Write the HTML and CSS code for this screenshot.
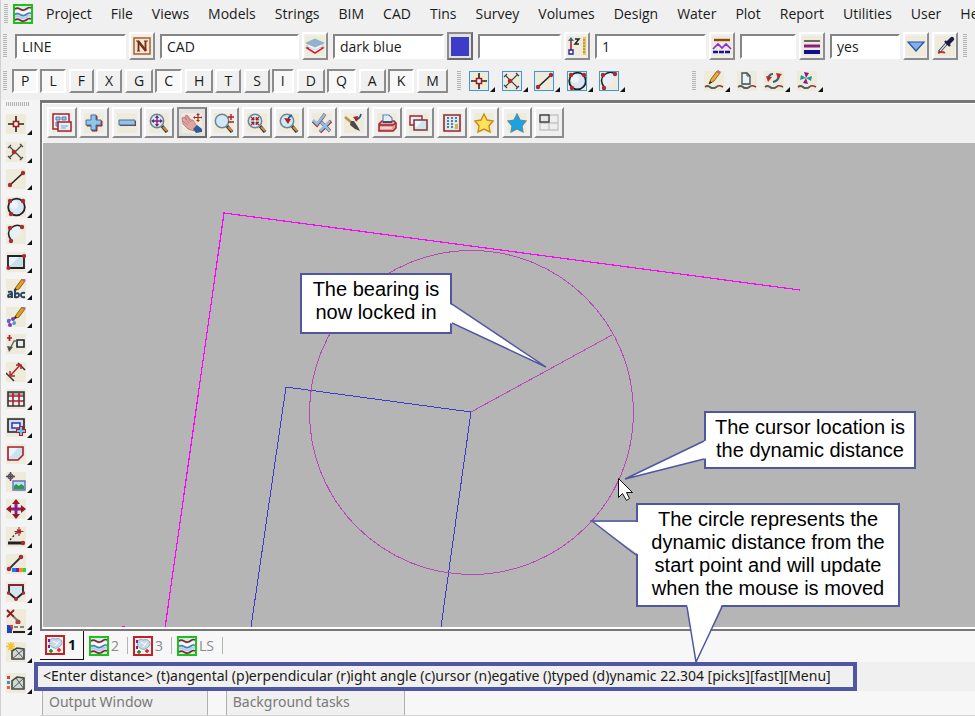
FILE: index.html
```html
<!DOCTYPE html>
<html lang="en">
<head>
<meta charset="utf-8">
<title>CAD workspace</title>
<link rel="stylesheet" href="styles.css">
</head>
<body>
<svg class="defs" aria-hidden="true">
  <symbol id="waves" viewBox="0 0 20 20"><rect x="1" y="1" width="18" height="18" fill="#dcebef" stroke="#19c419" stroke-width="2"/><g fill="none" stroke-width="1.6"><path d="M2 5c4-3 5 2 9 1s4-4 7-2" stroke="#7c2b30"/><path d="M2 8c4-3 5 2 9 1s4-4 7-2" stroke="#fff"/><path d="M2 10.500c4-3 5 2 9 1s4-4 7-2" stroke="#4a7fc0"/><path d="M2 13c4-3 5 2 9 1s4-4 7-2" stroke="#a9cdea"/><path d="M2 16c4-3 5 2 9 1s4-4 7-2" stroke="#7c2b30"/></g></symbol>
  <symbol id="plan" viewBox="0 0 20 20"><rect x="1" y="1" width="18" height="18" fill="#f4f1ee" stroke="#c4202a" stroke-width="2"/><path d="M5 5q2-3 5-1 4-2 7 2 1 4-3 6-3 3-7 0-4-2-2-7z" fill="#c6dbe8" stroke="#8fb0c6"/><path d="M8 6l5 3M10 11l4-5" stroke="#fff"/><path d="M3 4h2v3H3zM3 10h2v3H3z" fill="#8b1a9a"/><path d="M4 16h4M6 14v4" stroke="#128a12" stroke-width="1.4"/><path d="M12 15h4M14 13v4" stroke="#e31818" stroke-width="1.4"/></symbol>
  <symbol id="point" viewBox="0 0 20 20"><path d="M10 2v5M10 13v5M2 10h5M13 10h5" stroke="#222" stroke-width="1.600"/><path d="M7.500 7.500h5v5h-5z" fill="#fff" stroke="#a01820" stroke-width="1.600"/></symbol>
  <symbol id="cross" viewBox="0 0 20 20"><path d="M3 16L16 3M4 5l12 12M2 14l3 3M14 2l3 3M2 6l3-3M14 18l3-3" stroke="#444" stroke-width="1.200"/><circle cx="8" cy="10" r="2.300" fill="#a92b30"/></symbol>
  <symbol id="line" viewBox="0 0 20 20"><path d="M4 16L17 4" stroke="#222" stroke-width="1.600"/><circle cx="4" cy="16" r="2.200" fill="#a92b30"/><circle cx="17" cy="4" r="2.200" fill="#a92b30"/></symbol>
  <symbol id="circle" viewBox="0 0 20 20"><circle cx="10.500" cy="10" r="8.300" fill="#d6e6f2" stroke="#222" stroke-width="1.800"/><circle cx="8" cy="8" r="4" fill="#edf5fa"/><circle cx="4" cy="4" r="2.200" fill="#a92b30"/><circle cx="17" cy="4" r="2.200" fill="#a92b30"/><circle cx="5" cy="17" r="2.200" fill="#a92b30"/></symbol>
  <symbol id="arc" viewBox="0 0 20 20"><path d="M5 17Q0 8 6 3q6-3 11 0-2 8-12 14z" fill="#e6f0f7"/><path d="M5 16Q0 9 5 4q6-5 11-1" fill="none" stroke="#222" stroke-width="1.500"/><circle cx="4" cy="4" r="2.200" fill="#a92b30"/><circle cx="16" cy="3" r="2.200" fill="#a92b30"/><circle cx="5" cy="17" r="2.200" fill="#a92b30"/></symbol>
  <symbol id="rect" viewBox="0 0 20 20"><path d="M2 4h16v12H2z" fill="#c9e0ea" stroke="#222" stroke-width="1.800"/><path d="M3 5h10l-8 8H3z" fill="#e6f3f7"/><circle cx="18" cy="4" r="2.100" fill="#a92b30"/><circle cx="2.500" cy="16" r="2.100" fill="#a92b30"/></symbol>
  <symbol id="pencil" viewBox="0 0 20 20"><path d="M8 12l2-4 6-8 3 2-6 8z" fill="#e0a126" stroke="#6b4a12" stroke-width=".8"/><path d="M15 1l2-2 3 2-1.500 2z" fill="#c46b76"/><path d="M8 12l1-3 2 1.500z" fill="#222"/></symbol>
  <symbol id="text" viewBox="0 0 20 20"><use href="#pencil" width="20" height="20"/><g fill="none" stroke="#24405c" stroke-width="1.900"><path d="M2 13q4-1 4 1v5M6 15q-4 0-4 2t4 0M9 10v9M9 15q4-2 4 1t-4 2M19 14q-4-1-4 2t4 2"/></g></symbol>
  <symbol id="paint" viewBox="0 0 20 20"><use href="#pencil" width="20" height="20"/><circle cx="3" cy="14" r="2.200" fill="#6a5be0"/><circle cx="7" cy="12" r="2" fill="#7e3fa0"/><circle cx="8" cy="16" r="2" fill="#3ea0d8"/><circle cx="4" cy="18" r="2" fill="#8438b8"/><circle cx="5.500" cy="15" r="1.300" fill="#fff"/></symbol>
  <symbol id="leader" viewBox="0 0 20 20"><path d="M1 4h5M3.500 1v6" stroke="#b01c24" stroke-width="1.700"/><path d="M11 6h7v7h-7z" fill="#e3f1f6" stroke="#222" stroke-width="1.600"/><path d="M11 7H8L4 15" fill="none" stroke="#666" stroke-width="1.400"/><path d="M1 12l6 1-4 5z" fill="#555"/></symbol>
  <symbol id="dim" viewBox="0 0 20 20"><path d="M0 11l8 8M12 1l7 7" stroke="#333" stroke-width="1.500"/><path d="M5 13l9-10M4 9v5h5M10 3h5v4" fill="none" stroke="#b5232b" stroke-width="1.500"/></symbol>
  <symbol id="table" viewBox="0 0 20 20"><path d="M2 3h16v14H2z" fill="#f1f3f5"/><path d="M2 3h16v3H2z" fill="#aaa"/><path d="M2 7h16M2 12h16M7 4v13M13 4v13" stroke="#a6202c" stroke-width="1.600"/><path d="M2 3h16v14H2z" fill="none" stroke="#333" stroke-width="1.600"/></symbol>
  <symbol id="window" viewBox="0 0 20 20"><path d="M2 2h16v13H2z" fill="#cfdfe8" stroke="#222" stroke-width="1.600"/><path d="M6 6h8v5H6z" fill="#e7effa" stroke="#3434b8" stroke-width="1.500"/><path d="M15 9v10M10 14h10" stroke="#a3222b" stroke-width="4"/><path d="M15 10v8M11 14h8" stroke="#79c2ee" stroke-width="2"/></symbol>
  <symbol id="polygon" viewBox="0 0 20 20"><path d="M2 3h15v8l-5 5H2z" fill="#cde2ec" stroke="#a6202c" stroke-width="1.600"/><path d="M3 4h9l-7 8H3z" fill="#e8f4f8"/></symbol>
  <symbol id="image" viewBox="0 0 20 20"><path d="M7 9h12v9H7z" fill="#b9e0f4" stroke="#6470b8" stroke-width="1.400"/><path d="M8 17v-3l2-2 3 2 2-2 3 2v3z" fill="#2e9a48"/><path d="M4.500 0v9M0 4.500h9" stroke="#a3222b" stroke-width="1.500"/><circle cx="4.500" cy="4.500" r="2.300" fill="none" stroke="#33637d" stroke-width="1.400"/></symbol>
  <symbol id="move" viewBox="0 0 20 20"><path d="M10 3v14M3 10h14" stroke="#8a1b88" stroke-width="3"/><path d="M6 5l4-5 4 5zM6 15l4 5 4-5zM5 6l-5 4 5 4zM15 6l5 4-5 4z" fill="#941a28"/></symbol>
  <symbol id="angle" viewBox="0 0 20 20"><path d="M2 16h14" stroke="#222" stroke-width="3"/><circle cx="17" cy="16" r="2.200" fill="#a92b30"/><path d="M4 13l8-9" stroke="#333" stroke-width="1.300" stroke-dasharray="2 2"/><path d="M13 0v9M8.500 4.500h9M11 2.500l4 4M15 2.500l-4 4" stroke="#a3222b" stroke-width="1.100"/></symbol>
  <symbol id="colour" viewBox="0 0 20 20"><path d="M3 15L15 3" stroke="#333" stroke-width="1.800"/><circle cx="3" cy="15" r="2.300" fill="#a92b30"/><circle cx="15" cy="3" r="2.300" fill="#a92b30"/><path d="M6 14h4v4H6z" fill="#1676ff"/><path d="M10 14h3v4h-3z" fill="#8a1b88"/><path d="M13 14h4v4h-4z" fill="#ff8a2a"/><path d="M17 14h3v4h-3z" fill="#25d64a"/></symbol>
  <symbol id="shield" viewBox="0 0 20 20"><path d="M3 3h14v8l-7 6-7-6z" fill="#d3e6ee" stroke="#222" stroke-width="1.800"/><path d="M2 3h16" stroke="#a3222b" stroke-width="1.700"/><circle cx="2.500" cy="11" r="1.700" fill="#a92b30"/><circle cx="17.500" cy="11" r="1.700" fill="#a92b30"/><circle cx="10" cy="17" r="2" fill="#a92b30"/></symbol>
  <symbol id="delete" viewBox="0 0 20 20"><path d="M1 1l7 7M8 1L1 8" stroke="#8e1a22" stroke-width="1.800"/><path d="M8 8l4 4" stroke="#777" stroke-width="2"/><circle cx="12" cy="13" r="2.600" fill="#a94548"/></symbol>
  <symbol id="strip" viewBox="0 0 20 10"><path d="M1 1h5v8H1z" fill="#2244bb"/><path d="M3 1h4v5z" fill="#e04040"/><path d="M8 3h4M14 3h4" stroke="#666" stroke-width="1.400"/><path d="M7 8h12" stroke="#222" stroke-width="2"/></symbol>
  <symbol id="tin-new" viewBox="0 0 20 20"><path d="M5 0v9M0 4.500h9M2 1l6 7M8 1L2 8" stroke="#f4c424" stroke-width="1.500"/><path d="M6 17V9l5-3 7 1v10z" fill="#cfdad6" stroke="#444" stroke-width="1.600"/><path d="M6 17l12-10M10 8l8 9" stroke="#555"/></symbol>
  <symbol id="tin" viewBox="0 0 20 20"><path d="M1 3h3v3H1z" fill="#e23b3b"/><path d="M1 8h3v3H1z" fill="#22a2b4"/><path d="M1 13h3v3H1z" fill="#ef5b3c"/><path d="M6 16V8l5-4 7 1v11z" fill="#cfdad6" stroke="#444" stroke-width="1.600"/><path d="M6 16L18 5M10 5l8 11" stroke="#555"/></symbol>
  <symbol id="lens" viewBox="0 0 20 20"><path d="M13 13l5 6" stroke="#2e3c4a" stroke-width="3.400"/><path d="M14 14l4 4" stroke="#d98a2e" stroke-width="2"/><circle cx="8" cy="8" r="6.700" fill="#d2e8f2" stroke="#6c8794" stroke-width="1.500"/></symbol>
  <symbol id="squiggle" viewBox="0 0 20 20"><path d="M1 16c4-3 5 2 9 1s3-4 9-1" fill="none" stroke="#8c3a3e" stroke-width="1.600"/><path d="M2 15q3-1 5 2h4l3-2" fill="none" stroke="#3f6a68" stroke-width="1.400"/></symbol>
</svg>

<header class="top">
  <nav class="menubar" aria-label="Main menu">
    <span class="grip"></span>
    <svg class="icon logo"><use href="#waves"/></svg>
    <a href="#">Project</a><a href="#">File</a><a href="#">Views</a><a href="#">Models</a><a href="#">Strings</a><a href="#">BIM</a><a href="#">CAD</a><a href="#">Tins</a><a href="#">Survey</a><a href="#">Volumes</a><a href="#">Design</a><a href="#">Water</a><a href="#">Plot</a><a href="#">Report</a><a href="#">Utilities</a><a href="#">User</a><a href="#">Help</a>
  </nav>

  <div class="fields">
    <span class="grip"></span>
    <input class="field name" aria-label="Name" value="LINE">
    <button class="raised" aria-label="Names"><svg class="icon" viewBox="0 0 20 20"><path d="M2 2h16v16H2z" fill="#f2e7db" stroke="#b0602f" stroke-width="1.500"/><path d="M6.500 5v10M13.500 5v10" stroke="#7a2c10" stroke-width="1.800"/><path d="M6 5l8 10" stroke="#7a2c10" stroke-width="2.600"/><path d="M4 5h3M5 15h3M12 5h4" stroke="#7a2c10" stroke-width="1.200"/></svg></button>
    <input class="field model" aria-label="Model" value="CAD">
    <button class="raised" aria-label="Models"><svg class="icon" viewBox="0 0 20 20"><path d="M2 12l8 5 8-5-8-3z" fill="#fff" stroke="#cf1f2a" stroke-width="1.500"/><path d="M1 10l9 4 9-4-9-4z" fill="#eef3f6" stroke="#b9cbd5" stroke-width=".8"/><path d="M1 7l9 4 9-4-9-4z" fill="#8fb3d0" stroke="#8aa9c0" stroke-width=".8"/></svg></button>
    <input class="field colour" aria-label="Colour" value="dark blue">
    <button class="raised deep" aria-label="Colours"><span class="swatch"></span></button>
    <input class="field height" aria-label="Height" value="">
    <button class="raised" aria-label="Heights"><svg class="icon" viewBox="0 0 20 20"><path d="M4 4v11" stroke="#b01c24" stroke-width="1.600"/><path d="M1 5l3-4 3 4z" fill="#36658e"/><path d="M2 14h4v4H2z" fill="#fff" stroke="#24249a" stroke-width="1.400"/><path d="M8 3h4l-4 5h4" fill="none" stroke="#222" stroke-width="1.500"/><path d="M16 1h3v18h-3z" fill="#ecc66a"/><path d="M16 4h2M16 7h2M16 10h2M16 13h2M16 16h2" stroke="#97712a"/></svg></button>
    <input class="field style" aria-label="Line style" value="1">
    <button class="raised" aria-label="Line styles"><svg class="icon" viewBox="0 0 20 20"><path d="M2 4h16" stroke="#8c4a12" stroke-width="2.400"/><path d="M1 13l5-5 4 4 4-4 5 5" fill="none" stroke="#8a2be2" stroke-width="1.700"/><path d="M1 16h18" stroke="#10109a" stroke-width="2.400" stroke-dasharray="5 1"/></svg></button>
    <input class="field weight" aria-label="Weight" value="">
    <button class="raised" aria-label="Weights"><svg class="icon" viewBox="0 0 20 20"><path d="M2 5h16" stroke="#222" stroke-width="1.300"/><path d="M2 10h16" stroke="#8a1b88" stroke-width="3"/><path d="M2 16h16" stroke="#10108a" stroke-width="4"/></svg></button>
    <input class="field tinable" aria-label="Tinable" value="yes">
    <button class="raised" aria-label="Tinable choices"><svg class="icon" viewBox="0 0 20 20"><path d="M2 6h16l-8 9z" fill="#7fb2f0" stroke="#2a4fa8" stroke-width="1.200"/></svg></button>
    <button class="raised" aria-label="Pick attributes"><svg class="icon" viewBox="0 0 20 20"><path d="M3 17q4-2 7 0" stroke="#c33" stroke-width="2" fill="none"/><path d="M4 16l8-9" stroke="#445" stroke-width="3"/><path d="M5 15l7-8" stroke="#dde8f0" stroke-width="1.200"/><path d="M10 5l5 5" stroke="#1b1b44" stroke-width="2.400"/><path d="M13 7l4-4" stroke="#1b1b44" stroke-width="4.400" stroke-linecap="round"/></svg></button>
    <span class="grip"></span>
  </div>

  <div class="snaps">
    <span class="grip"></span>
    <div class="toggles">
      <button class="toggle on">P</button><button class="toggle on">L</button><button class="toggle">F</button><button class="toggle">X</button><button class="toggle">G</button><button class="toggle on">C</button><button class="toggle">H</button><button class="toggle">T</button><button class="toggle">S</button><button class="toggle on">I</button><button class="toggle">D</button><button class="toggle on">Q</button><button class="toggle">A</button><button class="toggle on">K</button><button class="toggle">M</button>
    </div>
    <span class="grip"></span>
    <div class="strip framed">
      <button class="tool" aria-label="Point snap"><svg class="icon"><use href="#point"/></svg></button>
      <button class="tool" aria-label="Cross snap"><svg class="icon"><use href="#cross"/></svg></button>
      <button class="tool" aria-label="Line snap"><svg class="icon"><use href="#line"/></svg></button>
      <button class="tool" aria-label="Circle snap"><svg class="icon"><use href="#circle"/></svg></button>
      <button class="tool" aria-label="Arc snap"><svg class="icon"><use href="#arc"/></svg></button>
    </div>
    <div class="strip edits">
      <span class="grip"></span>
      <button class="tool" aria-label="Edit string"><svg class="icon" viewBox="0 0 20 20"><use href="#squiggle" width="20" height="20"/><path d="M5 13l2-5 6-8 3 2-6 8z" fill="#e8ae2c" stroke="#6b4a12" stroke-width=".8"/><path d="M12 1l2-2 3 2-1.500 2z" fill="#c46b76"/><path d="M5 13l1-3 2 1.500z" fill="#222"/></svg></button>
      <button class="tool plain" aria-label="New string"><svg class="icon" viewBox="0 0 20 20"><path d="M5 2h5l3 3v8H5z" fill="#eaf3f6" stroke="#3b4d57" stroke-width="1.300"/><path d="M10 2v3h3" fill="none" stroke="#3b4d57"/><use href="#squiggle" width="20" height="20"/></svg></button>
      <button class="tool" aria-label="Swap string"><svg class="icon" viewBox="0 0 20 20"><path d="M9 3Q5 3 4 8M9 11q5-1 6-6" fill="none" stroke="#39627f" stroke-width="2.200"/><path d="M2 5l6 1-4 5zM12 2l6 1-4 5z" fill="#c1272d"/><use href="#squiggle" width="20" height="20"/></svg></button>
      <button class="tool" aria-label="Rotate string"><svg class="icon" viewBox="0 0 20 20"><path d="M9 7L7 1l5 1zM9 7l2 6-5-1z" fill="#8a1b88"/><path d="M9 7l6-2-1 5zM9 7L3 9l1-5z" fill="#1a9a92"/><use href="#squiggle" width="20" height="20"/></svg></button>
    </div>
  </div>
</header>

<main class="main">
  <aside class="palette" aria-label="CAD tools">
    <span class="grip flat"></span>
    <div class="palette-grid">
      <button class="tool" aria-label="Point"><svg class="icon"><use href="#point"/></svg></button>
      <button class="tool" aria-label="Intersection"><svg class="icon"><use href="#cross"/></svg></button>
      <button class="tool" aria-label="Line"><svg class="icon"><use href="#line"/></svg></button>
      <button class="tool" aria-label="Circle"><svg class="icon"><use href="#circle"/></svg></button>
      <button class="tool" aria-label="Arc"><svg class="icon"><use href="#arc"/></svg></button>
      <button class="tool" aria-label="Rectangle"><svg class="icon"><use href="#rect"/></svg></button>
      <button class="tool" aria-label="Text"><svg class="icon"><use href="#text"/></svg></button>
      <button class="tool" aria-label="Symbol"><svg class="icon"><use href="#paint"/></svg></button>
      <button class="tool" aria-label="Leader"><svg class="icon"><use href="#leader"/></svg></button>
      <button class="tool" aria-label="Dimension"><svg class="icon"><use href="#dim"/></svg></button>
      <button class="tool" aria-label="Table"><svg class="icon"><use href="#table"/></svg></button>
      <button class="tool" aria-label="Window"><svg class="icon"><use href="#window"/></svg></button>
      <button class="tool" aria-label="Polygon"><svg class="icon"><use href="#polygon"/></svg></button>
      <button class="tool" aria-label="Image"><svg class="icon"><use href="#image"/></svg></button>
      <button class="tool" aria-label="Move"><svg class="icon"><use href="#move"/></svg></button>
      <button class="tool" aria-label="Angle"><svg class="icon"><use href="#angle"/></svg></button>
      <button class="tool" aria-label="Colour"><svg class="icon"><use href="#colour"/></svg></button>
      <button class="tool" aria-label="Boundary"><svg class="icon"><use href="#shield"/></svg></button>
      <button class="tool" aria-label="Delete"><svg class="icon"><use href="#delete"/></svg></button>
    </div>
    <div class="palette-extra">
      <button class="tool half" aria-label="Attributes"><svg class="icon"><use href="#strip"/></svg></button>
      <button class="tool" aria-label="New tin"><svg class="icon"><use href="#tin-new"/></svg></button>
      <button class="tool" aria-label="Tin"><svg class="icon"><use href="#tin"/></svg></button>
    </div>
  </aside>

  <section class="workspace">
    <div class="view">
      <div class="viewbar">
        <button class="raised" aria-label="View menu"><svg class="icon" viewBox="0 0 20 20"><path d="M1 1h16v15H1z" fill="#f6eef0" stroke="#a6202c" stroke-width="1.500"/><path d="M4 4h4v3H4zM10 4h4v3h-4zM4 9h4v4H4z" fill="#9cc8e8" stroke="#4d7fae"/><path d="M6 9h13v9H6z" fill="#e3f0f8" stroke="#a6202c" stroke-width="1.500"/><path d="M9 13h7M9 15h5" stroke="#7aa5c4"/></svg></button>
        <button class="raised" aria-label="Add model"><svg class="icon" viewBox="0 0 20 20"><path d="M8 3h5v5h5v5h-5v5H8v-5H3V8h5z" fill="#9a1f28" stroke="#9a1f28"/><path d="M7 2h5v5h5v5h-5v5H7v-5H2V7h5z" fill="#8fc4ec" stroke="#4b6f92"/></svg></button>
        <button class="raised" aria-label="Remove model"><svg class="icon" viewBox="0 0 20 20"><path d="M3 8h16v5H3z" fill="#9a1f28"/><path d="M2 7h16v5H2z" fill="#8fc4ec" stroke="#4b6f92"/></svg></button>
        <button class="raised" aria-label="Fit"><svg class="icon" viewBox="0 0 20 20"><use href="#lens" width="20" height="20"/><path d="M8 4v8M4 8h8" stroke="#8a1b88" stroke-width="1.400"/><path d="M6 5l2-3 2 3zM6 11l2 3 2-3zM5 6L2 8l3 2zM11 6l3 2-3 2z" fill="#7d1a60"/></svg></button>
        <button class="raised deep" aria-label="Pan"><svg class="icon" viewBox="0 0 20 20"><path d="M0 5l2-1 3 3-2-4 2-1 4 5 2 0 4 6-3 5-6-2-5-5z" fill="#dfa5a2" stroke="#b57472" stroke-width=".8"/><path d="M2 4l5 6M5 3l4 6M1 8l5 4" stroke="#b57472" stroke-width=".7"/><path d="M11 16l4-4 5 4v3l-6 1z" fill="#2d5a98"/><path d="M16 1v7M12.500 4.500h7" stroke="#a3222b" stroke-width="1.200"/><path d="M14 2l2-2 2 2zM14 7l2 2 2-2zM13 3l-2 1.500 2 1.500zM19 3l1 1.500-1 1.500z" fill="#a3222b"/></svg></button>
        <button class="raised" aria-label="Zoom"><svg class="icon" viewBox="0 0 20 20"><use href="#lens" width="20" height="20"/><path d="M14 4h6M17 1v6M14 9h6" stroke="#b01c24" stroke-width="1.400"/></svg></button>
        <button class="raised" aria-label="Shrink"><svg class="icon" viewBox="0 0 20 20"><use href="#lens" width="20" height="20"/><path d="M4 4l3 3M12 4L9 7M4 12l3-3M12 12L9 9" stroke="#a3222b" stroke-width="1.200"/><path d="M7 4v3H4zM9 4v3h3zM7 12V9H4zM9 12V9h3z" fill="#a3222b" stroke="#a3222b" stroke-width=".6"/></svg></button>
        <button class="raised" aria-label="Previous view"><svg class="icon" viewBox="0 0 20 20"><use href="#lens" width="20" height="20"/><path d="M9 8q0-4 4-6" fill="none" stroke="#24549a" stroke-width="1.800"/><path d="M5 5l7 1-3 5z" fill="#b01c24"/></svg></button>
        <button class="raised" aria-label="Redraw"><svg class="icon" viewBox="0 0 20 20"><g fill="none"><path d="M1 8l4 4 8-11M9 9l9 9M19 8L8 19" stroke="#a3222b" stroke-width="3.200"/><path d="M1 7l4 4 8-10M9 9l9 9M18 8L8 18" stroke="#86c0e6" stroke-width="2.600"/></g></svg></button>
        <button class="raised" aria-label="Paint"><svg class="icon" viewBox="0 0 20 20"><path d="M1 4l7 6" stroke="#c48e4a" stroke-width="2.400"/><path d="M7 8l3 0 4 6 2 4-5-2-5-4z" fill="#4a4a4a"/><path d="M17 1q-1 5-6 6" fill="none" stroke="#24549a" stroke-width="1.600"/><path d="M9 4l5-1-1 6z" fill="#b01c24"/></svg></button>
        <button class="raised" aria-label="Print"><svg class="icon" viewBox="0 0 20 20"><path d="M2 11l3-3h12l2 2v5l-3 3H2z" fill="#e3a09f" stroke="#a3222b" stroke-width="1.500"/><path d="M6 9V2h6l3 3v4z" fill="#e2eefb" stroke="#5a86c4" stroke-width="1.200"/><path d="M2 12h14l3-2" fill="none" stroke="#a3222b" stroke-width="1.500"/><path d="M3 15h12" stroke="#f4e4e4" stroke-width="1.500"/><path d="M6 9h9" stroke="#333" stroke-width="1.500"/></svg></button>
        <button class="raised" aria-label="Copy view"><svg class="icon" viewBox="0 0 20 20"><path d="M1 3h12v9H1z" fill="#e6f1f7" stroke="#a6202c" stroke-width="1.400"/><path d="M5 7h13v10H5z" fill="#d2e4ef" stroke="#7c3440" stroke-width="1.500"/><path d="M6 8h7l-5 6H6z" fill="#f0f7fa"/></svg></button>
        <button class="raised" aria-label="Settings"><svg class="icon" viewBox="0 0 20 20"><path d="M2 2h16v16H2z" fill="#d9e9ef" stroke="#9a2630" stroke-width="1.600"/><path d="M5 5h2M9 5h2M13 5h2M5 8h2M9 8h2M13 8h2M5 11h2M9 11h2M5 14h2M9 14h2" stroke="#2f5a80" stroke-width="1.700"/><path d="M13 11h3v5h-3z" fill="#cdb44a"/></svg></button>
        <button class="raised" aria-label="Favourites"><svg class="icon" viewBox="0 0 20 20"><path d="M10 1l3 6 6 1-4 5 1 6-6-3-6 3 1-6-4-5 6-1z" fill="#ffe15a" stroke="#c98a1e" stroke-width="1.400"/></svg></button>
        <button class="raised" aria-label="Shared favourites"><svg class="icon" viewBox="0 0 20 20"><path d="M10 1l3 6 6 1-4 5 1 6-6-3-6 3 1-6-4-5 6-1z" fill="#18a4e4" stroke="#5a8aa0" stroke-width="1.200"/></svg></button>
        <button class="raised plain-bg" aria-label="Layout"><svg class="icon" viewBox="0 0 20 20"><path d="M1 2h18v15H1zM10 2v15M1 10h18" fill="#eee" stroke="#c4c4c4" stroke-width="1.300"/><path d="M1 2h9v7H1z" fill="#e6e6e6" stroke="#444" stroke-width="1.400"/></svg></button>
      </div>

      <div class="canvas">
        <svg class="drawing" aria-hidden="true">
          <g transform="translate(-43 -143)" fill="none" shape-rendering="crispEdges">
            <path d="M165 628L224 213L800 290M122 627h3" stroke="#f0f" stroke-width="1.200"/>
            <path d="M251 627L286 387L471 412L441 627" stroke="#3c3cc8"/>
            <path d="M471 412L612 335" stroke="#b848b8"/>
            <circle cx="471.500" cy="412.500" r="162" stroke="#b848b8"/>
          </g>
        </svg>
        <p class="callout bearing">The bearing is<br>now locked in</p>
        <p class="callout cursor">The cursor location is<br>the dynamic distance</p>
        <p class="callout radius">The circle represents the<br>dynamic distance from the<br>start point and will update<br>when the mouse is moved</p>
        <svg class="drawing tails" aria-hidden="true">
          <g transform="translate(-43 -143)" fill="#fff">
            <path d="M450 304L546 367L450 323z"/>
            <path d="M707 440L625 479L707 458z"/>
            <path d="M639 522L592 522L639 555z"/>
            <path d="M687 604L696 662L722 604z"/>
          </g>
          <g transform="translate(-43 -143)" fill="none" stroke="#5057a1" stroke-width="1.500">
            <path d="M452 304L546 367L452 323"/>
            <path d="M704 441L625 479L704 459"/>
            <path d="M636 521H592L636 555"/>
            <path d="M687 607L696 662L722 607"/>
          </g>
          <path transform="translate(-43 -143)" d="M618.500 478.500v19l4-4 4 7 3-2-3-6h6z" fill="#fff" stroke="#111"/>
        </svg>
      </div>
    </div>

    <nav class="tabs" aria-label="Views">
      <a class="tab active" href="#"><svg class="icon"><use href="#plan"/></svg>1</a>
      <a class="tab" href="#"><svg class="icon"><use href="#waves"/></svg>2</a>
      <a class="tab" href="#"><svg class="icon"><use href="#plan"/></svg>3</a>
      <a class="tab" href="#"><svg class="icon"><use href="#waves"/></svg>LS</a>
    </nav>

    <div class="prompt"><p class="prompt-text">&lt;Enter distance&gt; (t)angental (p)erpendicular (r)ight angle (c)ursor (n)egative ()typed (d)ynamic 22.304 [picks][fast][Menu]</p></div>

    <nav class="docks" aria-label="Panels">
      <a class="dock" href="#">Output Window</a>
      <a class="dock" href="#">Background tasks</a>
    </nav>
  </section>
</main>
</body>
</html>
```
FILE: styles.css
```css
* { box-sizing: border-box; }

body {
  margin: 0;
  min-height: 100vh;
  display: flex;
  flex-direction: column;
  overflow: hidden;
  background: #f0f0f0;
  color: #1a1a1a;
  font: 14px/20px "Open Sans", "Noto Sans", sans-serif;
}

a { color: inherit; text-decoration: none; }
p { margin: 0; }
button { font: inherit; color: inherit; padding: 0; border: 0; background: none; }

.defs { position: absolute; width: 0; height: 0; }

.icon {
  display: block;
  flex: none;
  width: 20px;
  height: 20px;
  overflow: visible;
}

.grip {
  flex: none;
  width: 4px;
  height: 20px;
  background: repeating-linear-gradient(#b4b4b4 0 1px, #f0f0f0 1px 2px);
}

.grip.flat {
  width: 24px;
  height: 4px;
  background: repeating-linear-gradient(90deg, #b4b4b4 0 1px, #f0f0f0 1px 2px);
}

/* Top bars */

.top { flex: none; border-left: 1px solid #d0d0d0; }

.menubar {
  display: flex;
  align-items: center;
  gap: 19px;
  height: 28px;
  padding-left: 3px;
  white-space: nowrap;
}

.menubar .logo { margin: 0 -6px 0 -14px; }

.fields {
  display: flex;
  align-items: center;
  height: 36px;
  padding-left: 2px;
}

.fields .grip { height: 24px; }
.fields .grip:first-child { margin-right: 8px; }
.fields .raised { width: 26px; margin: 0 5px 0 3px; }
.fields .raised + .raised { margin-left: -2px; }

.field {
  height: 25px;
  padding: 0 5px;
  border: 2px solid;
  border-color: #858585 #fff #fff #858585;
  border-radius: 0;
  background: #fff;
  color: inherit;
  font: inherit;
  outline: 0;
}

.name { width: 111px; }
.model { width: 139px; }
.colour { width: 111px; }
.height { width: 83px; }
.style { width: 111px; }
.weight { width: 56px; }
.tinable { width: 70px; }

.raised {
  flex: none;
  display: flex;
  align-items: center;
  justify-content: center;
  height: 28px;
  border: 2px solid;
  border-color: #fff #8c8c8c #8c8c8c #fff;
  background: #f0f0f0;
}

.raised .icon { background: #efebda; }
.raised.plain-bg .icon { background: none; }
.raised.deep { border-color: #8c8c8c #6a6a6a #6a6a6a #8c8c8c; background: #e2e2e2; }
.swatch { width: 18px; height: 19px; background: #3c3cc8; }

.snaps {
  display: flex;
  align-items: center;
  height: 36px;
  padding: 0 0 3px 2px;
}

.toggles { display: flex; gap: 2px; margin: 0 9px 0 5px; }

.toggle {
  height: 24px;
  padding: 0 7px;
  border: 2px solid;
  border-color: #fff #8c8c8c #8c8c8c #fff;
  line-height: 18px;
}

.toggle:nth-child(even) { margin-right: 1px; }
.toggle.on { border-color: #8c8c8c #fff #fff #8c8c8c; background: #f8f8f8; }

.strip { display: flex; align-items: center; margin-left: 8px; }
.edits { margin-left: 60px; }
.edits .grip { margin-right: 8px; }

.tool {
  position: relative;
  flex: none;
  width: 26px;
  height: 20px;
}

.tool .icon { background: #efebda; }

.tool::after {
  content: "";
  position: absolute;
  right: 0;
  bottom: -1px;
  border: solid transparent;
  border-bottom-color: #111;
  border-width: 0 0 5px 5px;
}

.tool.plain { width: 20px; }
.tool.plain::after { display: none; }
.tool.half, .half .icon { height: 10px; }
.strip .tool { margin-right: 7px; }
.framed .tool:nth-child(even) { margin-right: 6px; }
.framed .icon { outline: 1px solid #3a97f0; outline-offset: -1px; }

/* Main area */

.main { flex: 1; display: flex; min-height: 0; }

.palette {
  flex: none;
  width: 40px;
  padding: 2px 0 0 5px;
  border-left: 1px solid #d0d0d0;
  background: #f4f4f4;
}

.palette .grip { display: block; margin-bottom: 8px; }
.palette-grid { display: grid; grid-auto-rows: 28px 27px; }
.palette-extra { display: grid; row-gap: 11px; margin-top: -13px; }
.palette-extra .half { margin-bottom: -3px; }

.workspace {
  flex: 1;
  min-width: 0;
  display: flex;
  flex-direction: column;
  background: #f7f7f7;
}

.view {
  flex: 1;
  display: flex;
  flex-direction: column;
  border: solid #777;
  border-width: 3px 0 2px 2px;
}

.viewbar {
  flex: none;
  display: flex;
  gap: 2px;
  height: 40px;
  padding: 3px 0 0 4px;
  border: solid #fff;
  border-width: 1px 0 0 1px;
  background: #f0f0f0;
}

.viewbar .raised { width: 30px; height: 31px; }
.viewbar .raised:nth-child(even) { margin-right: 1px; }

.canvas {
  position: relative;
  flex: 1;
  border: solid #fff;
  border-width: 0 0 2px 1px;
  background: #b5b5b5;
}

.drawing {
  position: absolute;
  inset: 0;
  width: 100%;
  height: 100%;
}

.tails { z-index: 2; overflow: visible; pointer-events: none; }

.callout {
  position: absolute;
  z-index: 1;
  padding: 3px 0 5px;
  border: 2px solid #5057a1;
  background: #fff;
  color: #000;
  font: 20px/23px "Liberation Sans", Arial, sans-serif;
  text-align: center;
  white-space: nowrap;
}

.bearing { left: 257px; top: 130px; width: 152px; padding-bottom: 8px; }
.cursor { left: 661px; top: 268px; width: 212px; }
.radius { left: 593px; top: 360px; width: 264px; }

/* Bottom bars */

.tabs { flex: none; display: flex; height: 31px; color: #8a8a8a; }

.tab {
  display: flex;
  align-items: center;
  gap: 2px;
  height: 29px;
  padding: 0 0 0 5px;
}

.tab:not(.active)::after {
  content: "";
  width: 1px;
  height: 17px;
  margin-left: 6px;
  background: #b4b4b4;
}

.tab.active {
  gap: 3px;
  padding: 0 7px 0 5px;
  border: solid #111;
  border-width: 0 1px 1px 0;
  color: #111;
  font-weight: 700;
}

.prompt {
  flex: none;
  position: relative;
  margin-left: -6px;
  background: #f0f0f0;
}

.prompt-text {
  width: fit-content;
  height: 29px;
  padding: 0 22px 0 5px;
  border: 4px solid #5057a1;
  background: #f0f0f0;
  font-family: "Noto Sans", sans-serif;
  line-height: 20px;
  white-space: nowrap;
}

.docks {
  flex: none;
  display: flex;
  gap: 18px;
  height: 25px;
  padding-left: 2px;
  border-bottom: 1px solid #d4d4d4;
  color: #7a7a7a;
  font-family: "Noto Sans", sans-serif;
}

.dock {
  padding: 1px 54px 0 6px;
  border: solid #b0b0b0;
  border-width: 0 1px;
  background: #f0f0f0;
}
```
